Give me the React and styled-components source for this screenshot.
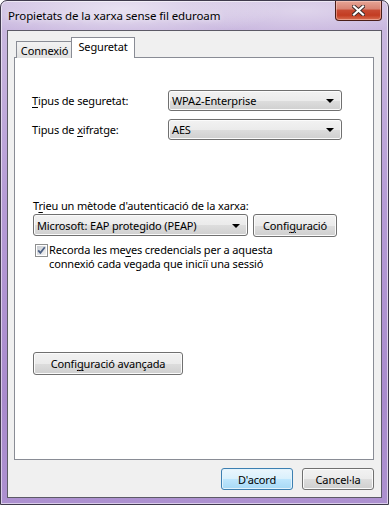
import React from 'react';
import styled, { createGlobalStyle, css } from 'styled-components';

const Global = createGlobalStyle`
  html, body { margin: 0; padding: 0; }
  body {
    width: 389px; height: 505px; overflow: hidden; background: #fff;
    font-family: "Noto Sans", "Open Sans", sans-serif;
    font-size: 11px; letter-spacing: -0.15px; color: #000;
  }
  * { box-sizing: border-box; }
`;

const Frame = styled.div`
  width: 389px;
  height: 505px;
  display: flex;
  flex-direction: column;
  border: 1px solid #3f3a4c;
  border-radius: 7px 7px 0 0;
  padding: 0 6px 6px 6px;
  background:
    radial-gradient(ellipse 160px 30px at 120px 8px, rgba(255,255,255,0.55), rgba(255,255,255,0) 100%),
    radial-gradient(ellipse 120px 24px at 300px 10px, rgba(255,255,255,0.35), rgba(255,255,255,0) 100%),
    linear-gradient(180deg, #cfc0e2 0px, #c9b7df 30px, #b69cd6 200px, #a98bcd 400px, #ad91d0 505px);
  box-shadow: inset 0 0 0 1px rgba(255,255,255,0.55);
`;

const TitleBar = styled.div`
  height: 29px;
  display: flex;
  align-items: flex-start;
  justify-content: space-between;
`;

const Title = styled.div`
  padding: 7px 0 0 1px;
  font-size: 11.5px;
  letter-spacing: -0.1px;
  line-height: 16px;
  color: #000;
  text-shadow: 0 0 6px rgba(255,255,255,0.9);
`;

const CloseBtn = styled.div`
  width: 47px;
  height: 20px;
  border: 1px solid #4a1d17;
  border-top: none;
  border-radius: 0 0 4px 4px;
  background: linear-gradient(180deg, #e6a596 0%, #d98474 40%, #c84a32 50%, #c33c22 75%, #d96f52 100%);
  box-shadow: inset 0 0 0 1px rgba(255,220,210,0.45);
  display: flex;
  align-items: center;
  justify-content: center;
`;

const Client = styled.div`
  flex: 1;
  display: flex;
  flex-direction: column;
  background: #f0f0f0;
  border: 1px solid #5c5a66;
  padding: 6px 7px 0 6px;
`;

const TabRow = styled.div`
  display: flex;
  align-items: flex-end;
  height: 21px;
  margin-bottom: -1px;
  padding-left: 2px;
  position: relative;
  z-index: 1;
`;

const Tab = styled.div`
  border: 1px solid #898c95;
  border-bottom: none;
  line-height: 15px;
  text-align: center;
  white-space: nowrap;
  ${p => p.$active ? css`
    width: 64px;
    height: 21px;
    background: #fff;
    margin-left: -2px;
    padding-top: 1px;
  ` : css`
    width: 57px;
    height: 17px;
    background: linear-gradient(180deg, #f2f2f2 0%, #ebebeb 50%, #e0e0e0 100%);
    padding-top: 1px;
  `}
`;

const Panel = styled.div`
  height: 403px;
  background: #fff;
  border: 1px solid #898c95;
  padding: 32px 0 0 17px;
  display: flex;
  flex-direction: column;
`;

const SettingGrid = styled.div`
  display: grid;
  grid-template-columns: 136px 174px;
  grid-auto-rows: 21px;
  row-gap: 8px;
  align-items: center;
`;

const Label = styled.div`
  line-height: 15px;
  white-space: nowrap;
`;

const U = styled.span`
  text-decoration: underline;
  text-underline-offset: 2px;
`;

const buttonFace = css`
  border: 1px solid #707070;
  border-radius: 3px;
  background: linear-gradient(180deg, #f2f2f2 0%, #ebebeb 50%, #dddddd 51%, #cfcfcf 100%);
  box-shadow: inset 0 0 0 1px #fbfbfb;
`;

const Combo = styled.div`
  ${buttonFace}
  height: ${p => p.$h || 21}px;
  width: ${p => p.$w}px;
  display: flex;
  align-items: center;
  justify-content: space-between;
  padding: 0 7px 0 3px;
  line-height: 15px;
  white-space: nowrap;
`;

const Arrow = styled.span`
  width: 0;
  height: 0;
  border-left: 4px solid transparent;
  border-right: 4px solid transparent;
  border-top: 4px solid #000;
  margin-top: 1px;
`;

const AuthLabel = styled(Label)`
  margin-top: 58px;
  padding-left: 1px;
`;

const AuthRow = styled.div`
  display: flex;
  gap: 5px;
  margin-top: 1px;
  padding-left: 1px;
`;

const Button = styled.div`
  ${buttonFace}
  height: ${p => p.$h || 23}px;
  width: ${p => p.$w}px;
  display: flex;
  align-items: center;
  justify-content: center;
  line-height: 15px;
  white-space: nowrap;
  ${p => p.$default && css`
    border-color: #3c7fb1;
    background: linear-gradient(180deg, #eaf6fd 0%, #d9f0fc 50%, #bee6fd 51%, #a7d9f5 100%);
    box-shadow: inset 0 0 0 1px #e3f3fc;
  `}
`;

const CheckRow = styled.div`
  display: flex;
  align-items: flex-start;
  gap: 1px;
  margin-top: 6px;
  padding-left: 3px;
`;

const CheckBox = styled.svg`
  flex: none;
  margin-top: 1px;
`;

const CheckText = styled.div`
  line-height: 14px;
`;

const AdvancedRow = styled.div`
  margin-top: 81px;
  padding-left: 1px;
`;

const Footer = styled.div`
  flex: 1;
  display: flex;
  justify-content: flex-end;
  gap: 9px;
  padding-top: 8px;
`;

function CloseGlyph() {
  return (
    <svg width="13" height="11" viewBox="0 0 13 11">
      <path d="M2 1.5 L11 9.5 M11 1.5 L2 9.5" stroke="#3b2a2a" strokeWidth="4" strokeLinecap="square" />
      <path d="M2 1.5 L11 9.5 M11 1.5 L2 9.5" stroke="#ffffff" strokeWidth="2.2" strokeLinecap="square" />
    </svg>
  );
}

function Check() {
  return (
    <CheckBox width="13" height="13" viewBox="0 0 13 13">
      <defs>
        <linearGradient id="cbg" x1="0" y1="0" x2="1" y2="1">
          <stop offset="0" stopColor="#c7cbd1" />
          <stop offset="1" stopColor="#f4f4f4" />
        </linearGradient>
      </defs>
      <rect x="0.5" y="0.5" width="12" height="12" fill="#fff" stroke="#8e8f8f" />
      <rect x="2" y="2" width="9" height="9" fill="url(#cbg)" />
      <path d="M3.2 6.3 L5.4 8.8 L9.8 3.2" fill="none" stroke="#4d6185" strokeWidth="1.8" />
    </CheckBox>
  );
}

export default function App() {
  return (
    <>
      <Global />
      <Frame>
        <TitleBar>
          <Title>Propietats de la xarxa sense fil eduroam</Title>
          <CloseBtn><CloseGlyph /></CloseBtn>
        </TitleBar>
        <Client>
          <TabRow>
            <Tab>Connexió</Tab>
            <Tab $active>Seguretat</Tab>
          </TabRow>
          <Panel>
            <SettingGrid>
              <Label><U>T</U>ipus de seguretat:</Label>
              <Combo $w={174}><span>WPA2-Enterprise</span><Arrow /></Combo>
              <Label>Tipus de <U>x</U>ifratge:</Label>
              <Combo $w={174}><span>AES</span><Arrow /></Combo>
            </SettingGrid>
            <AuthLabel>T<U>r</U>ieu un mètode d'autenticació de la xarxa:</AuthLabel>
            <AuthRow>
              <Combo $w={215} $h={22}><span>Microsoft: EAP protegido (PEAP)</span><Arrow /></Combo>
              <Button $w={84} $h={23}>Confi<U>g</U>uració</Button>
            </AuthRow>
            <CheckRow>
              <Check />
              <CheckText>
                Recorda les me<U>v</U>es credencials per a aquesta<br />
                connexió cada vegada que iniciï una sessió
              </CheckText>
            </CheckRow>
            <AdvancedRow>
              <Button $w={150} $h={23}>Confi<U>g</U>uració avançada</Button>
            </AdvancedRow>
          </Panel>
          <Footer>
            <Button $w={72} $h={22} $default>D'acord</Button>
            <Button $w={72} $h={22}>Cancel·la</Button>
          </Footer>
        </Client>
      </Frame>
    </>
  );
}
